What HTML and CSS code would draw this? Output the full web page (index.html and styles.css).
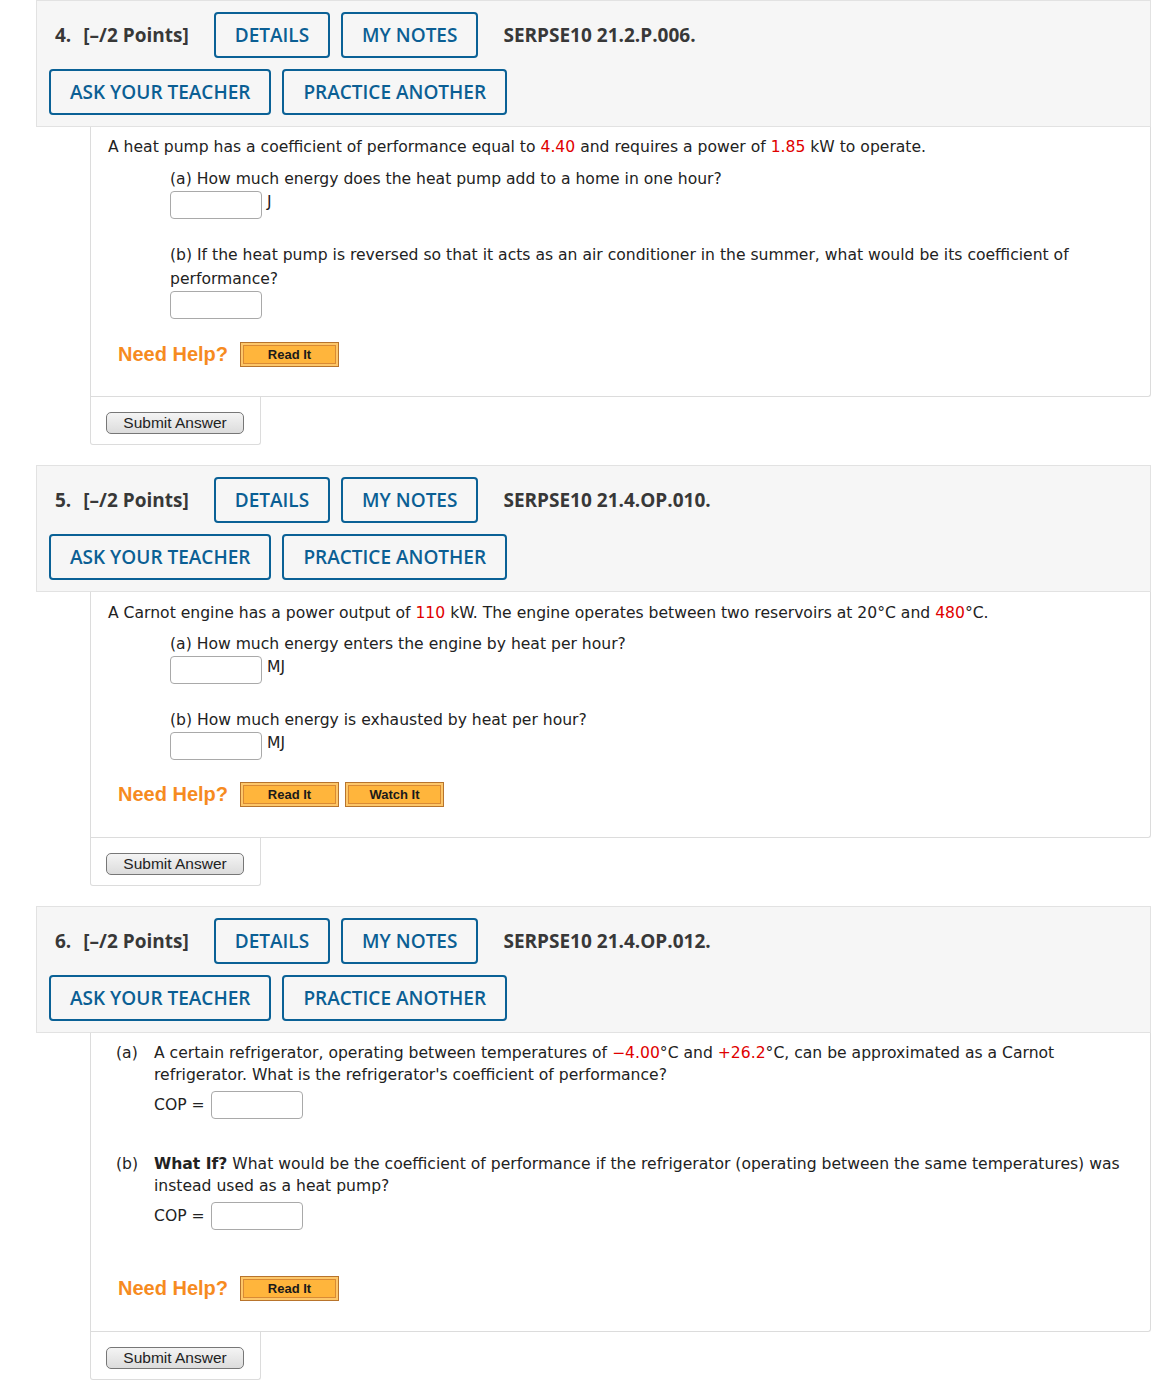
FILE: index.html
```html
<!DOCTYPE html>
<html>
<head>
<meta charset="utf-8">
<link rel="stylesheet" href="styles.css">
</head>
<body>
<div class="page">

  <section class="question">
    <div class="q-head">
      <div class="head-row first">
        <span class="q-num">4.</span>
        <span class="q-points">[–/2 Points]</span>
        <button class="btn-blue first-btn">DETAILS</button>
        <button class="btn-blue">MY NOTES</button>
        <span class="q-code">SERPSE10 21.2.P.006.</span>
      </div>
      <div class="head-row">
        <button class="btn-blue">ASK YOUR TEACHER</button>
        <button class="btn-blue">PRACTICE ANOTHER</button>
      </div>
    </div>
    <div class="q-body b4">
      <p class="main">A heat pump has a coefficient of performance equal to <span class="red">4.40</span> and requires a power of <span class="red">1.85</span> kW to operate.</p>
      <div class="part">
        <p class="prompt">(a) How much energy does the heat pump add to a home in one hour?</p>
        <div class="answer"><span class="box"></span><span class="unit">J</span></div>
      </div>
      <div class="part gap">
        <p class="prompt">(b) If the heat pump is reversed so that it acts as an air conditioner in the summer, what would be its coefficient of performance?</p>
        <div class="answer"><span class="box"></span></div>
      </div>
      <div class="help h4">
        <span class="need">Need Help?</span>
        <span class="btn-orange">Read It</span>
      </div>
    </div>
    <div class="q-submit"><button class="submit">Submit Answer</button></div>
  </section>

  <section class="question">
    <div class="q-head">
      <div class="head-row first">
        <span class="q-num">5.</span>
        <span class="q-points">[–/2 Points]</span>
        <button class="btn-blue first-btn">DETAILS</button>
        <button class="btn-blue">MY NOTES</button>
        <span class="q-code">SERPSE10 21.4.OP.010.</span>
      </div>
      <div class="head-row">
        <button class="btn-blue">ASK YOUR TEACHER</button>
        <button class="btn-blue">PRACTICE ANOTHER</button>
      </div>
    </div>
    <div class="q-body b5">
      <p class="main">A Carnot engine has a power output of <span class="red">110</span> kW. The engine operates between two reservoirs at 20°C and <span class="red">480</span>°C.</p>
      <div class="part p5">
        <p class="prompt">(a) How much energy enters the engine by heat per hour?</p>
        <div class="answer"><span class="box"></span><span class="unit">MJ</span></div>
      </div>
      <div class="part gap5">
        <p class="prompt">(b) How much energy is exhausted by heat per hour?</p>
        <div class="answer"><span class="box"></span><span class="unit">MJ</span></div>
      </div>
      <div class="help h5">
        <span class="need">Need Help?</span>
        <span class="btn-orange">Read It</span>
        <span class="btn-orange">Watch It</span>
      </div>
    </div>
    <div class="q-submit"><button class="submit">Submit Answer</button></div>
  </section>

  <section class="question">
    <div class="q-head">
      <div class="head-row first">
        <span class="q-num">6.</span>
        <span class="q-points">[–/2 Points]</span>
        <button class="btn-blue first-btn">DETAILS</button>
        <button class="btn-blue">MY NOTES</button>
        <span class="q-code">SERPSE10 21.4.OP.012.</span>
      </div>
      <div class="head-row">
        <button class="btn-blue">ASK YOUR TEACHER</button>
        <button class="btn-blue">PRACTICE ANOTHER</button>
      </div>
    </div>
    <div class="q-body b6">
      <div class="lpart">
        <span class="lbl">(a)</span>
        <div class="lcontent">
          <p class="ltext">A certain refrigerator, operating between temperatures of <span class="red">−4.00</span>°C and <span class="red">+26.2</span>°C, can be approximated as a Carnot refrigerator. What is the refrigerator's coefficient of performance?</p>
          <div class="cop"><span class="cop-lbl">COP =</span><span class="box"></span></div>
        </div>
      </div>
      <div class="lpart lgap">
        <span class="lbl">(b)</span>
        <div class="lcontent">
          <p class="ltext"><b>What If?</b> What would be the coefficient of performance if the refrigerator (operating between the same temperatures) was instead used as a heat pump?</p>
          <div class="cop"><span class="cop-lbl">COP =</span><span class="box"></span></div>
        </div>
      </div>
      <div class="help h6">
        <span class="need">Need Help?</span>
        <span class="btn-orange">Read It</span>
      </div>
    </div>
    <div class="q-submit"><button class="submit">Submit Answer</button></div>
  </section>

</div>
</body>
</html>
```

FILE: styles.css
```css
* { box-sizing: border-box; }
body {
  margin: 0;
  background: #fff;
  font-family: "DejaVu Sans", Verdana, sans-serif;
  color: #222;
}
p { margin: 0; }
.page {
  margin-left: 36px;
  width: 1115px;
}
.question { margin-bottom: 20px; }

.q-head {
  background: #f6f6f6;
  border: 1px solid #e2e2e2;
  padding: 11px 12px 11px 12px;
  display: flex;
  flex-direction: column;
  gap: 11px;
}
.head-row {
  display: flex;
  align-items: center;
  gap: 11px;
  font-family: "Open Sans", sans-serif;
}
.head-row.first { padding-left: 6px; }
.q-num, .q-points, .q-code {
  font-size: 19px;
  font-weight: 700;
  color: #383838;
}
.q-num { margin-right: 1px; }
.first-btn { margin-left: 14px; }
.q-code { margin-left: 14px; }
.btn-blue {
  height: 46px;
  padding: 0 19px;
  border: 2px solid #0a6196;
  border-radius: 4px;
  background: transparent;
  color: #0b5f94;
  font-family: "Open Sans", sans-serif;
  font-size: 19px;
  font-weight: 600;
  letter-spacing: 0;
}

.q-body {
  margin-left: 54px;
  border: 1px solid #dcdcdc;
  border-top: none;
  border-radius: 0 0 3px 0;
  padding: 9px 17px 29px 17px;
  font-size: 15.6px;
}
.b5 { padding-top: 10px; padding-bottom: 30px; }
.b6 { padding-top: 9px; padding-bottom: 30px; }
.main { line-height: 22px; }
.red { color: #e00000; }
.part { margin-left: 62px; margin-top: 9px; line-height: 24px; }
.part.p5 { margin-top: 8px; }
.part.gap { margin-top: 24px; }
.part.gap5 { margin-top: 24px; }
.answer { display: flex; align-items: flex-start; }
.box {
  display: inline-block;
  width: 92px;
  height: 28px;
  border: 1px solid #a9a9a9;
  border-radius: 4px;
  background: #fff;
}
.unit { margin-left: 5px; line-height: 22px; }

.help {
  display: flex;
  align-items: center;
  gap: 12px;
  margin-left: 10px;
}
.h4 { margin-top: 23px; }
.h5 { margin-top: 22px; }
.h6 { margin-top: 46px; }
.help .btn-orange + .btn-orange { margin-left: -6px; }
.need {
  font-family: "Liberation Sans", Arial, sans-serif;
  font-weight: 700;
  font-size: 20px;
  color: #f68b1f;
}
.btn-orange {
  display: inline-flex;
  align-items: center;
  justify-content: center;
  width: 99px;
  height: 25px;
  border: 1px solid #b8742c;
  background: #ffb53c;
  box-shadow: inset 0 0 0 2px #fdc76a, inset 0 0 0 3px #d98a34;
  font-family: "Liberation Sans", Arial, sans-serif;
  font-weight: 700;
  font-size: 13px;
  color: #1a1a1a;
}

.q-submit {
  margin-left: 54px;
  width: 171px;
  border: 1px solid #dcdcdc;
  border-top: none;
  border-radius: 0 0 3px 3px;
  padding: 15px 0 10px 15px;
}
.submit {
  display: block;
  width: 138px;
  height: 22px;
  padding: 0;
  border: 1px solid #777;
  border-radius: 5px;
  background: linear-gradient(#f4f4f4, #dcdcdc);
  font-family: "Liberation Sans", Arial, sans-serif;
  font-size: 15.5px;
  color: #222;
}

.lpart {
  display: flex;
  margin-left: 8px;
  line-height: 22px;
}
.lgap { margin-top: 34px; }
.lbl { width: 38px; flex: none; }
.lcontent { flex: 1; }
.cop { display: flex; align-items: center; margin-top: 5px; }
.cop-lbl { width: 57px; }
```
